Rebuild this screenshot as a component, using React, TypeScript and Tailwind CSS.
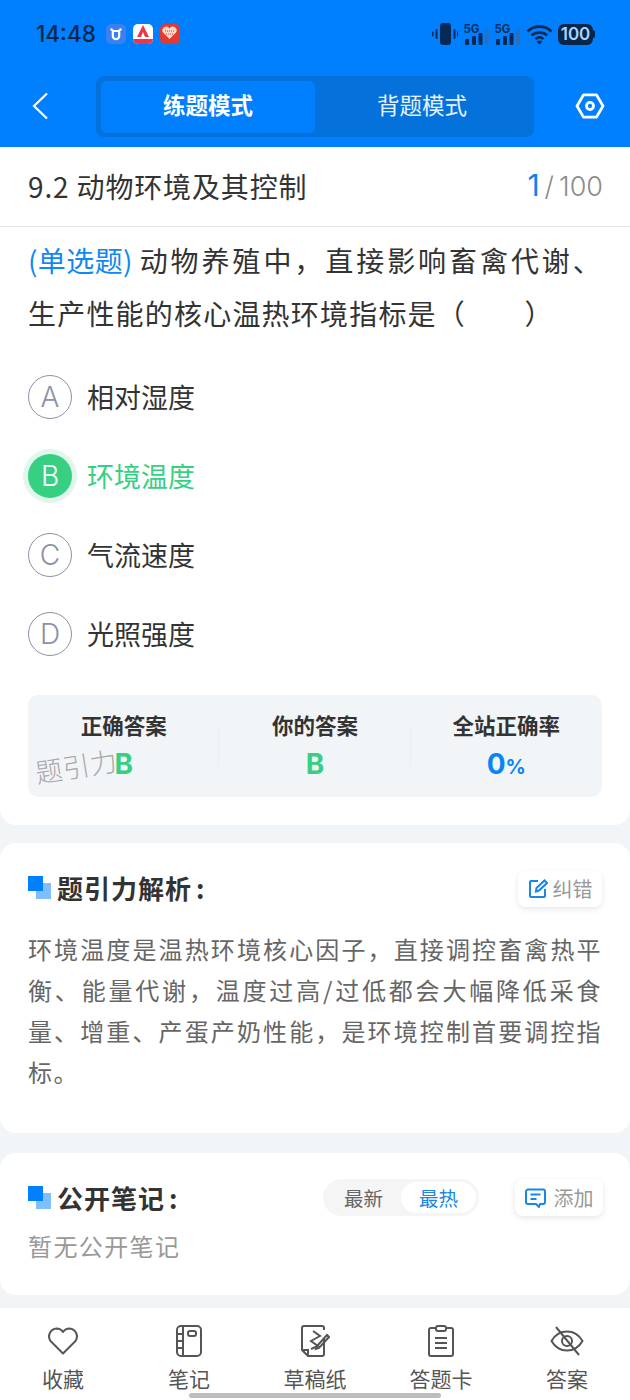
import React from "react";

const font = { fontFamily: '"Noto Sans CJK SC", sans-serif' };

function Bars({ className = "" }: { className?: string }) {
  return (
    <svg width="26" height="24" viewBox="0 0 26 24" className={className}>
      <text x="0.5" y="10.500" fontSize="11.500" fontWeight="700" fill="#07305f" fontFamily="Inter, sans-serif">5G</text>
      <rect x="2" y="17" width="4" height="6" rx="1" fill="#062a55" />
      <rect x="9" y="14" width="4" height="9" rx="1" fill="#062a55" />
      <rect x="15.5" y="11" width="4" height="12" rx="1" fill="#062a55" />
      <rect x="22" y="7" width="3.5" height="16" rx="1" fill="#2c6fb8" />
    </svg>
  );
}

function Mark() {
  return (
    <span className="relative block w-[23px] h-[23px] shrink-0">
      <span className="absolute right-0 bottom-0 w-[15px] h-[16px] bg-[#80bfff]" />
      <span className="absolute left-0 top-0 w-[15px] h-[15px] bg-[#0080ff]" />
    </span>
  );
}

function Option({ l, t, on }: { l: string; t: string; on?: boolean }) {
  return (
    <div className="flex items-center h-[79px]">
      {on ? (
        <span className="ml-[-5px] mr-[10px] w-[54px] h-[54px] rounded-full bg-[#e2f7ec] flex items-center justify-center shrink-0">
          <span className="w-[44px] h-[44px] rounded-full bg-[#37d083] text-white flex items-center justify-center text-[28px] font-light" style={{ fontFamily: "Inter, sans-serif" }}>{l}</span>
        </span>
      ) : (
        <span className="mr-[15px] w-[44px] h-[44px] rounded-full border-[1.5px] border-[#8d90a8] text-[#8d90a8] flex items-center justify-center text-[28px] font-light shrink-0" style={{ fontFamily: "Inter, sans-serif" }}>{l}</span>
      )}
      <span className={`text-[27px] leading-none ${on ? "text-[#37d083]" : "text-[#333333]"}`}>{t}</span>
    </div>
  );
}

function Stat({ label, children, border }: { label: string; children: React.ReactNode; border?: boolean }) {
  return (
    <div className="relative flex-1 flex flex-col items-center pt-[15px]">
      <div className="text-[21.5px] leading-[30px] font-bold text-[#333333]">{label}</div>
      <div className="mt-[5px] h-[38px] flex items-center justify-center font-bold" style={{ fontFamily: "Inter, sans-serif" }}>{children}</div>
      {border && <span className="absolute right-0 top-[32px] h-[40px] w-px bg-[#ebeef2]" />}
    </div>
  );
}

function NavItem({ label, children }: { label: string; children: React.ReactNode }) {
  return (
    <div className="flex-1 flex flex-col items-center">
      <div className="h-[40px] flex items-center justify-center">{children}</div>
      <div className="mt-[2px] text-[21px] leading-[30px] text-[#555555]">{label}</div>
    </div>
  );
}

export default function App() {
  return (
    <div className="relative w-[630px] h-[1400px] overflow-hidden bg-[#f2f5f8] flex flex-col" style={font}>
      <header className="h-[147px] bg-[#0080ff] shrink-0">
        <div className="h-[68px] flex items-center pl-[36px] pr-[35px]">
          <span className="text-[22.5px] font-medium text-[#07264a]" style={{ fontFamily: "Inter, sans-serif" }}>14:48</span>
          <span className="ml-[10px] w-[20px] h-[20px] rounded-[5px] bg-[#3b7ff0] flex items-center justify-center">
            <svg width="14" height="14" viewBox="0 0 14 14" fill="none" stroke="#fff" strokeWidth="2.2"><path d="M2 1.5C3 4 4 4 7 4s4 0 5-2.5M3.8 4v5a3.2 3.2 0 0 0 6.4 0V4" /></svg>
          </span>
          <span className="ml-[7px] w-[20px] h-[20px] rounded-[5px] bg-white overflow-hidden relative flex items-start justify-center">
            <svg width="16" height="13" viewBox="0 0 16 13"><path d="M8 1 2 13h4l2-5 2 5h4z" fill="#e8384f" /></svg>
            <span className="absolute bottom-0 left-0 right-0 h-[5px] bg-[#e8384f]" />
          </span>
          <span className="ml-[7px] w-[20px] h-[20px] rounded-[5px] bg-[#e03a32] flex items-start justify-center pt-[2px]">
            <svg width="15" height="13" viewBox="0 0 15 13"><path d="M7.5 13 1 6.5A3.6 3.6 0 0 1 7.5 2.5 3.6 3.6 0 0 1 14 6.5z" fill="#fbd9c8" /><path d="M3 5h9M4 8h7" stroke="#e03a32" strokeWidth="1" strokeDasharray="1 1" /></svg>
          </span>
          <span className="flex-1" />
          <svg width="26" height="22" viewBox="0 0 26 22" className="mr-[5px]">
            <rect x="8" y="0" width="11" height="22" rx="3" fill="#062a55" />
            <rect x="3.5" y="6" width="2" height="10" rx="1" fill="#062a55" />
            <rect x="0" y="8.5" width="1.5" height="5" rx=".7" fill="#062a55" />
            <rect x="21.5" y="6" width="2" height="10" rx="1" fill="#062a55" />
            <rect x="25" y="8.5" width="1" height="5" fill="#062a55" />
          </svg>
          <Bars />
          <Bars className="ml-[5px]" />
          <svg width="27" height="21" viewBox="0 0 27 21" fill="none" stroke="#062a55" strokeWidth="2.6" className="ml-[6px]">
            <path d="M1.5 7.5C8 1 19 1 25.5 7.5M5.5 11.5c4.500-4 11.500-4 16 0M9.500 15c2.500-2 5.500-2 8 0" />
            <path d="M13.500 20.500l-3-3.200c1.800-1.200 4.200-1.200 6 0z" fill="#062a55" stroke="none" />
          </svg>
          <span className="ml-[5px] w-[35px] h-[21px] rounded-[6px] bg-[#07264a] text-[#a9d4ff] text-[17px] font-semibold leading-[21px] text-center" style={{ fontFamily: "Inter, sans-serif" }}>100</span>
          <span className="w-[2px] h-[8px] bg-[#07264a] rounded-r-sm" />
        </div>
        <div className="h-[62px] mt-[7px] flex items-center">
          <div className="w-[96px] pl-[32px] shrink-0">
            <svg width="16" height="28" viewBox="0 0 16 28" fill="none" stroke="#fff" strokeWidth="2.2"><path d="M15 1.500 2 14l13 12.500" /></svg>
          </div>
          <div className="w-[438px] h-[61px] rounded-[8px] bg-[#0572dc] p-[5px] flex">
            <div className="w-[214px] h-[52px] pb-[3px] rounded-[6px] bg-[#0080ff] flex items-center justify-center text-white text-[22.5px] font-bold">练题模式</div>
            <div className="flex-1 pb-[3px] flex items-center justify-center text-[#e6f2ff] text-[22.5px]">背题模式</div>
          </div>
          <div className="flex-1 pl-[16px] flex justify-center">
            <svg width="30" height="26" viewBox="0 0 32 28" fill="none" stroke="#fff" strokeWidth="3" strokeLinejoin="round"><path d="M9 2h14l7 12-7 12H9L2 14z" /><circle cx="16" cy="14" r="3.800" /></svg>
          </div>
        </div>
      </header>

      <section className="bg-white rounded-b-[16px] h-[678px] shrink-0 flex flex-col">
        <div className="h-[80px] pb-[2px] border-b border-[#e5e5e5] flex items-center justify-between pl-[28px] pr-[27px] shrink-0">
          <span className="text-[28px] tracking-[0.85px] text-[#333333]">9.2 动物环境及其控制</span>
          <span className="flex items-baseline text-[27px] text-[#8c8c8c]" style={{ fontFamily: "Inter, sans-serif" }}>
            <span className="text-[#0a84f5] text-[30px]">1</span><span className="font-light ml-[5px] tracking-[1px]">/</span><span className="font-light ml-[4px]">100</span>
          </span>
        </div>
        <div className="px-[28px] pt-[7px] text-[28px] leading-[53px] tracking-[1.2px] text-[#333333] text-justify">
          <span className="inline-block mr-[5px] text-[#1088f5] tracking-[0.4px]">(单选题)</span>动物养殖中，直接影响畜禽代谢、生产性能的核心温热环境指标是（　　）
        </div>
        <div className="px-[28px] mt-[17px]">
          <Option l="A" t="相对湿度" />
          <Option l="B" t="环境温度" on />
          <Option l="C" t="气流速度" />
          <Option l="D" t="光照强度" />
        </div>
        <div className="mx-[28px] mt-[22px] h-[102px] rounded-[10px] bg-[#f2f5f8] flex">
          <Stat label="正确答案" border><span className="text-[28px] text-[#37d083]">B</span></Stat>
          <Stat label="你的答案" border><span className="text-[28px] text-[#37d083]">B</span></Stat>
          <Stat label="全站正确率"><span className="text-[28px] text-[#0a84f5]">0<span className="text-[20px]">%</span></span></Stat>
        </div>
      </section>

      <section className="mt-[18px] h-[290px] bg-white rounded-[16px] px-[28px] shrink-0">
        <div className="pt-[26px] h-[85px] flex items-start justify-between">
          <div className="flex items-center gap-[6px] h-[36px]">
            <Mark />
            <span className="text-[26px] font-bold text-[#333333] tracking-[1px]">题引力解析<span className="ml-[4px]">:</span></span>
          </div>
          <div className="mt-[2px] w-[84px] h-[36px] rounded-[8px] bg-white shadow-[0_2px_6px_rgba(0,0,0,0.10)] flex items-center justify-center gap-[5px] text-[20px] text-[#999999]">
            <svg width="20" height="20" viewBox="0 0 20 20" fill="none" stroke="#1788e8" strokeWidth="2"><path d="M10 2H3a1 1 0 0 0-1 1v14a1 1 0 0 0 1 1h13a1 1 0 0 0 1-1v-7" /><path d="M8 12.500 8.500 9 16.500 1.500l2.500 2.500L11 11.500z" /></svg>
            纠错
          </div>
        </div>
        <p className="text-[24px] leading-[41px] tracking-[1.5px] text-[#666666] text-justify">环境温度是温热环境核心因子，直接调控畜禽热平衡、能量代谢，温度过高/过低都会大幅降低采食量、增重、产蛋产奶性能，是环境控制首要调控指标。</p>
      </section>

      <section className="mt-[20px] h-[142px] bg-white rounded-[16px] px-[28px] shrink-0">
        <div className="pt-[23px] flex items-center h-[66px]">
          <Mark />
          <span className="ml-[6px] text-[26px] font-bold text-[#333333] tracking-[1px]">公开笔记<span className="ml-[4px]">:</span></span>
          <span className="flex-1" />
          <div className="w-[156px] h-[37px] rounded-full bg-[#f5f5f5] p-[3px] flex items-center text-[19.5px]">
            <span className="flex-1 text-center text-[#666666]">最新</span>
            <span className="w-[75px] h-[31px] rounded-full bg-white text-[#1788e8] flex items-center justify-center">最热</span>
          </div>
          <div className="ml-[36px] w-[88px] h-[37px] rounded-[8px] bg-white shadow-[0_2px_6px_rgba(0,0,0,0.10)] flex items-center justify-center gap-[8px] text-[20px] text-[#999999] mr-[-1px]">
            <svg width="21" height="20" viewBox="0 0 21 20" fill="none" stroke="#1788e8" strokeWidth="2"><path d="M3 1.500h15a2 2 0 0 1 2 2V14a2 2 0 0 1-2 2h-3l-1 3-3-3H3a2 2 0 0 1-2-2V3.500a2 2 0 0 1 2-2z" strokeLinejoin="round" /><path d="M5.500 6.500h10M5.500 11h6" /></svg>
            添加
          </div>
        </div>
        <div className="mt-[11px] text-[24px] leading-[32px] tracking-[1.4px] text-[#999999]">暂无公开笔记</div>
      </section>

      <nav className="mt-[13px] flex-1 bg-white flex pt-[13px]">
        <NavItem label="收藏">
          <svg width="32" height="28" viewBox="0 0 32 28" fill="none" stroke="#555" strokeWidth="2"><path d="M16 26.500 3.500 14A8 8 0 0 1 9.500 1.500c2.800 0 5 1.300 6.500 3.500 1.500-2.200 3.700-3.500 6.500-3.500A8 8 0 0 1 28.500 14z" strokeLinejoin="round" /></svg>
        </NavItem>
        <NavItem label="笔记">
          <svg width="26" height="32" viewBox="0 0 26 32" fill="none" stroke="#555" strokeWidth="2"><rect x="1" y="1" width="24" height="30" rx="4" /><path d="M7 1v30M1 9h6M1 16h6M1 23h6" /><rect x="12" y="6" width="8" height="5" rx="2" /></svg>
        </NavItem>
        <NavItem label="草稿纸">
          <svg width="30" height="32" viewBox="0 0 30 32" fill="none" stroke="#555" strokeWidth="2"><path d="M24 14v15a2 2 0 0 1-2 2H8l-6-6V3a2 2 0 0 1 2-2h18a2 2 0 0 1 2 2v2" /><path d="M2 25h6v6" /><path d="M13 6l7 5-9 5 7 5-7 3" /><path d="M17 21l-1 3 3-1 10-11-2-2z" /></svg>
        </NavItem>
        <NavItem label="答题卡">
          <svg width="28" height="32" viewBox="0 0 28 32" fill="none" stroke="#555" strokeWidth="2"><path d="M8 3H4a2 2 0 0 0-2 2v24a2 2 0 0 0 2 2h20a2 2 0 0 0 2-2V5a2 2 0 0 0-2-2h-4" /><rect x="9" y="1" width="10" height="5" rx="2" /><path d="M8 13h12M8 18h12M8 23h12" /></svg>
        </NavItem>
        <NavItem label="答案">
          <svg width="34" height="30" viewBox="0 0 34 30" fill="none" stroke="#555" strokeWidth="2"><path d="M1.500 15C5 9 10.500 5.500 17 5.500S29 9 32.500 15C29 21 23.500 24.500 17 24.500S5 21 1.500 15z" /><circle cx="17" cy="15" r="5" /><path d="M6 1l23 28" /></svg>
        </NavItem>
      </nav>

      <span className="absolute left-[189px] bottom-[2px] w-[252px] h-[5px] rounded-full bg-[#bdbdbd]" />
      <span className="absolute left-[35px] top-[748px] text-[27px] text-[#a8a8a8] font-light tracking-[0.5px] -rotate-[9deg] leading-[36px]">题引力</span>
    </div>
  );
}
